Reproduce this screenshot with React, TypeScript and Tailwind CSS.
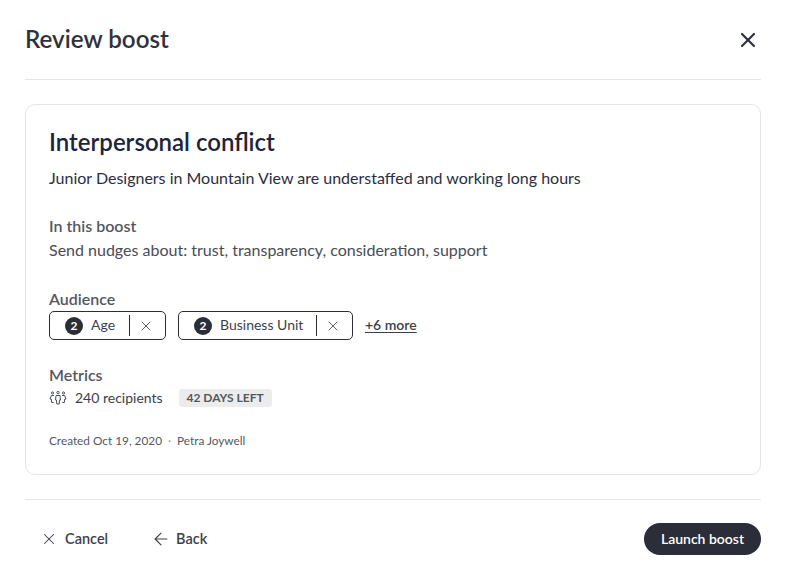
import { ArrowLeft, X } from 'lucide-react';

function Chip({ label, width }: { label: string; width: string }) {
  return (
    <div className={`flex h-[29px] items-center rounded-[5px] border border-[#2b2e38] pl-[15px] ${width}`}>
      <span className="flex h-[18px] w-[18px] items-center justify-center rounded-full bg-[#2b2e38] text-[12px] font-bold leading-none text-white">
        2
      </span>
      <span className="ml-2 -mt-[1px] text-[14px] leading-none text-[#3c3f4a]">{label}</span>
      <span className="ml-auto h-[21px] w-px bg-[#2b2e38]" />
      <span className="mr-[4px] flex w-[31px] justify-center">
        <X size={16} strokeWidth={1.25} className="text-[#3c3f4a]" />
      </span>
    </div>
  );
}

function PeopleIcon() {
  return (
    <svg width="18" height="14" viewBox="0 0 18 14" fill="none" stroke="#4b4e58" strokeWidth="1">
      <circle cx="3.5" cy="2" r="1.1" />
      <circle cx="9" cy="1.6" r="1.2" />
      <circle cx="14.5" cy="2" r="1.1" />
      <path d="M7 4.5h4l.5 4.5h-1l-.3 4H7.8l-.3-4h-1z" />
      <path d="M5 4.5H2.4L1 8h1.2l.5 3.5h2" />
      <path d="M13 4.5h2.6L17 8h-1.2l-.5 3.5h-2" />
    </svg>
  );
}

export default function App() {
  return (
    <div className="h-[582px] w-[787px] bg-white pl-[25px] pr-[26px] font-['Lato',sans-serif]">
      <header className="flex h-20 items-center justify-between border-b border-[#e6e6e6]">
        <h1 className="-mt-[1px] text-[24.2px] font-semibold leading-none text-[#2f323c]">Review boost</h1>
        <X size={24} strokeWidth={2.2} className="mr-[1px] text-[#2f323c]" />
      </header>

      <section className="mt-6 h-[371px] rounded-[10px] border border-[#e4e4e4] px-[23px] pt-[23px]">
        <h2 className="text-[24px] font-semibold leading-[28px] text-[#20243a]">Interpersonal conflict</h2>
        <p className="mt-[12px] text-[16px] leading-[20px] text-[#2b2e42]">
          Junior Designers in Mountain View are understaffed and working long hours
        </p>

        <h3 className="mt-[28px] text-[16px] font-semibold leading-[20px] text-[#55575f]">In this boost</h3>
        <p className="mt-[4px] text-[16px] leading-[20px] text-[#4a4c55]">
          Send nudges about: trust, transparency, consideration, support
        </p>

        <h3 className="mt-[29px] text-[16px] font-semibold leading-[20px] text-[#55575f]">Audience</h3>
        <div className="mt-[2px] flex items-center">
          <Chip label="Age" width="w-[117px]" />
          <div className="ml-3">
            <Chip label="Business Unit" width="w-[175px]" />
          </div>
          <span className="ml-3 -mt-[1px] text-[14px] font-semibold leading-none text-[#3c3f4a] underline underline-offset-2">+6 more</span>
        </div>

        <h3 className="mt-[25px] text-[16px] font-semibold leading-[20px] text-[#55575f]">Metrics</h3>
        <div className="mt-[3px] flex items-center">
          <PeopleIcon />
          <span className="ml-2 text-[14px] leading-[20px] text-[#3c3f4a]">240 recipients</span>
          <span className="ml-4 flex h-[18px] w-[93px] items-center justify-center rounded-[3px] bg-[#ececec] text-[12px] font-bold leading-none text-[#55575f]">
            42 DAYS LEFT
          </span>
        </div>

        <div className="mt-[27px] flex items-center text-[11.8px] leading-none text-[#55575f]">
          <span>Created Oct 19, 2020</span>
          <span className="mx-[6px] text-[#9a9a9a]">·</span>
          <span>Petra Joywell</span>
        </div>
      </section>

      <footer className="mt-6 flex h-[78px] items-center justify-between border-t border-[#e6e6e6]">
        <div className="ml-[15px] flex items-center">
          <button className="flex items-center text-[14.5px] font-semibold text-[#3c3f4a]">
            <X size={18} strokeWidth={1.4} />
            <span className="ml-[7px]">Cancel</span>
          </button>
          <button className="ml-[43px] flex items-center text-[14.5px] font-semibold text-[#3c3f4a]">
            <ArrowLeft size={20} strokeWidth={1.4} />
            <span className="ml-[5px]">Back</span>
          </button>
        </div>
        <button className="flex h-8 w-[117px] items-center justify-center rounded-full bg-[#2b2e38] text-[14px] font-semibold text-white">
          Launch boost
        </button>
      </footer>
    </div>
  );
}
